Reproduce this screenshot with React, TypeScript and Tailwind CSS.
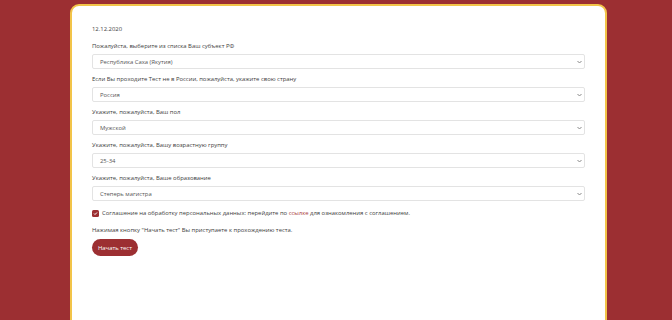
const fields = [
  { label: 'Пожалуйста, выберите из списка Ваш субъект РФ', value: 'Республика Саха (Якутия)' },
  { label: 'Если Вы проходите Тест не в России, пожалуйста, укажите свою страну', value: 'Россия' },
  { label: 'Укажите, пожалуйста, Ваш пол', value: 'Мужской' },
  { label: 'Укажите, пожалуйста, Вашу возрастную группу', value: '25-34' },
  { label: 'Укажите, пожалуйста, Ваше образование', value: 'Степерь магистра' },
];

const Chevron = () => (
  <svg width="5" height="4" viewBox="0 0 10 6" fill="none" stroke="#888" strokeWidth="2">
    <path d="M1 1l4 4 4-4" />
  </svg>
);

export default function App() {
  return (
    <div
      className="h-[320px] w-[672px] overflow-hidden bg-[#9c2f32] pt-[4px]"
      style={{ fontFamily: '"Open Sans", "Noto Sans", sans-serif' }}
    >
      <div className="ml-[70px] h-[330px] w-[537px] rounded-t-[9px] border-2 border-[#f2c449] bg-white px-[20px] pt-[18px] text-[5.9px] leading-[10px] text-[#3d3d3d]">
        <p className="mb-[7px]">12.12.2020</p>
        {fields.map((f) => (
          <div key={f.label} className="mb-[5px]">
            <p className="mb-[3px]">{f.label}</p>
            <div className="flex h-[15px] items-center justify-between rounded-[2px] border border-[#e3e3e3] pl-[7px] pr-[2px] text-[#555]">
              <span>{f.value}</span>
              <Chevron />
            </div>
          </div>
        ))}
        <div className="mt-[7px] flex items-center gap-[3px]">
          <span className="flex h-[7px] w-[7px] items-center justify-center rounded-[1.5px] bg-[#9c2f32]">
            <svg width="5" height="5" viewBox="0 0 10 10" fill="none" stroke="white" strokeWidth="2">
              <path d="M2 5l2 2 4-4" />
            </svg>
          </span>
          <span>
            Соглашение на обработку персональных данных: перейдите по{' '}
            <span className="text-[#a8383a]">ссылке</span> для ознакомления с соглашением.
          </span>
        </div>
        <p className="mt-[7px]">Нажимая кнопку "Начать тест" Вы приступаете к прохождению теста.</p>
        <button className="mt-[4px] h-[17px] rounded-full bg-[#9c2f32] px-[6px] text-[5.9px] text-white">
          Начать тест
        </button>
      </div>
    </div>
  );
}
